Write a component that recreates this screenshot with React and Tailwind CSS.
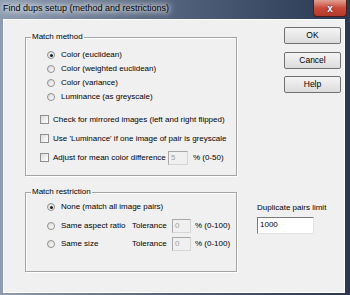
import React from 'react';

const font = { fontFamily: '"Liberation Sans", Arial, sans-serif' };

const Radio = ({ checked }) => (
  <span className="w-[8px] h-[8px] shrink-0 rounded-full border border-[#8e8f8f] bg-gradient-to-br from-[#d8d8d8] to-white flex items-center justify-center">
    {checked && <span className="w-[3px] h-[3px] rounded-full bg-[#1c1c1c]" />}
  </span>
);

const Check = () => (
  <span className="w-[9px] h-[9px] shrink-0 border border-[#8e8f8f] bg-gradient-to-br from-[#dcdcdc] to-white" />
);

const Field = ({ value, className = '' }) => (
  <span className={`h-[14px] shrink-0 border border-[#d5d5d5] border-t-[#a8a8a8] border-l-[#a8a8a8] bg-[#f0f0f0] text-[#a0a0a0] pl-[2px] leading-[12px] ${className}`}>
    {value}
  </span>
);

const Button = ({ children }) => (
  <button className="w-[57px] h-[17px] rounded-[2px] border border-[#707070] bg-gradient-to-b from-[#f4f4f4] to-[#dcdcdc] text-[8.5px] leading-none text-black">
    {children}
  </button>
);

const Group = ({ title, className = '', children }) => (
  <fieldset className={`w-[212px] min-w-0 border border-[#a4a4a4] shadow-[1px_1px_0_#fff,inset_1px_1px_0_#fff] ${className}`}>
    <legend className="ml-[5px] px-[1px] leading-[10px] bg-[#f0f0f0]">{title}</legend>
    {children}
  </fieldset>
);

export default function App() {
  return (
    <div className="w-[350px] h-[295px] flex flex-col bg-gradient-to-r from-[#8e9cb2] via-[#52627c] to-[#2a3852] text-[8px] text-black whitespace-nowrap overflow-hidden" style={font}>
      {/* title bar */}
      <div className="h-[19px] shrink-0 flex items-start">
        <div className="pl-[3px] pt-[2px] text-[9px] leading-[12px] [text-shadow:0_0_4px_#fff,0_0_8px_#fff,0_0_10px_#fff]">
          Find dups setup (method and restrictions)
        </div>
        <div className="ml-auto mr-[3px] w-[34px] h-[17px] rounded-b-[4px] border border-t-0 border-[#4a1c1c] bg-gradient-to-b from-[#e0a093] via-[#c9493a] to-[#b23a2b] flex items-center justify-center text-white font-bold text-[10px] [text-shadow:0_0_2px_#3a0a0a]">
          x
        </div>
      </div>

      {/* client area */}
      <div className="ml-[3px] w-[342px] h-[274px] border border-white bg-[#f0f0f0] flex">
        <div className="w-[233px] shrink-0 pl-[21px] pt-[12px] flex flex-col">
          <Group title="Match method" className="pb-[8px]">
            <div className="pt-[6px] pl-[21px] flex flex-col">
              {['Color (euclidean)', 'Color (weighted euclidean)', 'Color (variance)', 'Luminance (as greyscale)'].map((t, i) => (
                <div key={t} className="h-[14px] flex items-center gap-[6px]">
                  <Radio checked={i === 0} />
                  <span>{t}</span>
                </div>
              ))}
            </div>
            <div className="mt-[6px] pl-[14px] flex flex-col">
              <div className="h-[19px] flex items-center gap-[4px]">
                <Check />
                <span>Check for mirrored images (left and right flipped)</span>
              </div>
              <div className="h-[19px] flex items-center gap-[4px]">
                <Check />
                <span>Use 'Luminance' if one image of pair is greyscale</span>
              </div>
              <div className="h-[19px] flex items-center gap-[4px]">
                <Check />
                <span className="w-[111px] shrink-0">Adjust for mean color difference</span>
                <Field value="5" className="w-[20px]" />
                <span className="ml-[1px]">% (0-50)</span>
              </div>
            </div>
          </Group>

          <Group title="Match restriction" className="mt-[11px] pb-[17px]">
            <div className="pt-[1px] pl-[21px] flex flex-col">
              <div className="h-[18.5px] flex items-center gap-[6px]">
                <Radio checked />
                <span>None (match all image pairs)</span>
              </div>
              {['Same aspect ratio', 'Same size'].map((t) => (
                <div key={t} className="h-[18.5px] flex items-center gap-[6px]">
                  <Radio />
                  <span className="w-[65px] shrink-0">{t}</span>
                  <span className="w-[34px] shrink-0">Tolerance</span>
                  <Field value="0" className="w-[19px]" />
                  <span className="ml-[-2px]">% (0-100)</span>
                </div>
              ))}
            </div>
          </Group>
        </div>

        <div className="ml-[20px] pt-[7px] flex flex-col">
          <div className="ml-[27px] flex flex-col">
            <Button>OK</Button>
            <div className="mt-[8px]"><Button>Cancel</Button></div>
            <div className="mt-[7px]"><Button>Help</Button></div>
          </div>
          <div className="mt-[110px] leading-[10px]">Duplicate pairs limit</div>
          <div className="mt-[4px] w-[57px] h-[17px] border border-[#e2e2e2] border-t-[#7a7a7a] border-l-[#7a7a7a] bg-white pl-[2px] leading-[14px]">
            1000
          </div>
        </div>
      </div>
    </div>
  );
}
